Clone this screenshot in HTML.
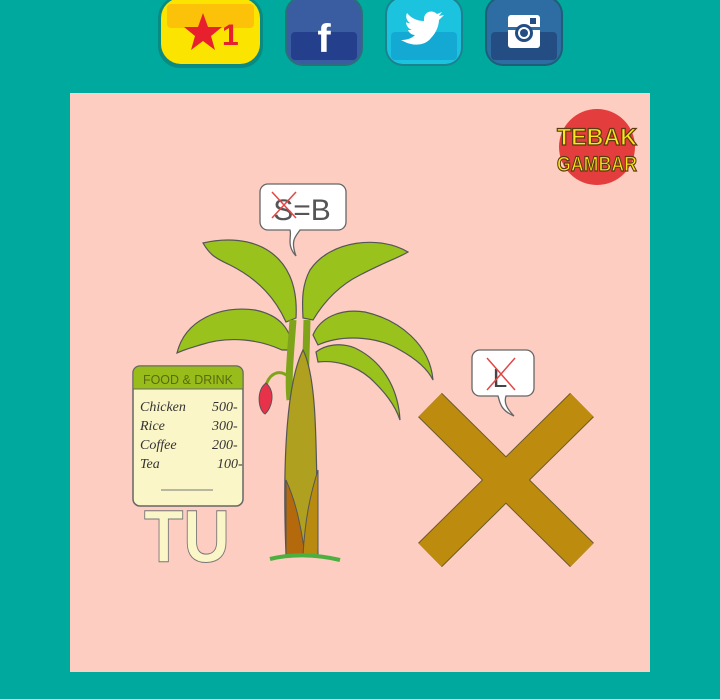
<!DOCTYPE html>
<html><head><meta charset="utf-8"><style>
html,body{margin:0;padding:0;width:720px;height:699px;background:#00a99e;overflow:hidden;font-family:"Liberation Sans",sans-serif}
</style></head><body>
<svg width="720" height="699" viewBox="0 0 720 699" style="position:absolute;left:0;top:0">
<rect x="158" y="-4" width="105" height="72" rx="22" fill="#0a8a80"/>
<rect x="161" y="-2" width="99" height="66" rx="20" fill="#fbe400"/>
<rect x="167" y="4" width="87" height="24" rx="4" fill="#fcc20a"/>
<polygon points="203,13 208,27 222,27 211,36 215,50 203,41 191,50 195,36 184,27 198,27" fill="#e8202e"/>
<text x="222" y="45" font-size="30" font-weight="bold" fill="#e8202e">1</text>
<rect x="285" y="-4" width="78" height="70" rx="18" fill="#2c6f7a"/>
<rect x="287" y="-2" width="74" height="66" rx="16" fill="#3a5ca1"/>
<rect x="291" y="32" width="66" height="28" rx="4" fill="#243f8b"/>
<text x="324" y="52" font-size="40" font-weight="bold" fill="#fff" text-anchor="middle">f</text>
<rect x="385" y="-4" width="78" height="70" rx="18" fill="#1c8290"/>
<rect x="387" y="-2" width="74" height="66" rx="16" fill="#1cc3de"/>
<rect x="391" y="32" width="66" height="28" rx="4" fill="#14a9d3"/>
<path d="M405 42c8 4 20 4 26-4 6-6 8-14 8-18l5-5-5 1 3-4-5 2c-5-5-13-2-13 5l0 2c-7 0-13-3-17-8-2 4 0 8 3 10-2 0-3 0-4-1 0 4 3 7 6 8-2 0-3 0-4 0 1 3 4 5 7 5-4 4-9 5-14 5z" fill="#fff"/>
<rect x="485" y="-4" width="78" height="70" rx="18" fill="#1d5f77"/>
<rect x="487" y="-2" width="74" height="66" rx="16" fill="#2e6da3"/>
<rect x="491" y="32" width="66" height="28" rx="4" fill="#244e83"/>
<rect x="508" y="15" width="32" height="33" rx="3" fill="#fff"/>
<rect x="508" y="27" width="32" height="3" fill="#2e6da3"/>
<circle cx="524" cy="33" r="9" fill="#244e83"/><circle cx="524" cy="33" r="6" fill="#fff"/><circle cx="524" cy="33" r="4" fill="#244e83"/>
<rect x="530" y="18" width="6" height="6" fill="#244e83"/>
<rect x="70" y="93" width="580" height="579" fill="#fdcdc1"/>
<circle cx="597" cy="147" r="38" fill="#e43d3d"/>
<text x="597" y="145" font-size="24" font-weight="bold" fill="#f8e51a" stroke="#5a3a10" stroke-width="1.2" text-anchor="middle" textLength="80" lengthAdjust="spacingAndGlyphs">TEBAK</text>
<text x="597" y="171" font-size="21" font-weight="bold" fill="#f8e51a" stroke="#5a3a10" stroke-width="1.2" text-anchor="middle" textLength="80" lengthAdjust="spacingAndGlyphs">GAMBAR</text>
<rect x="133" y="366" width="110" height="140" rx="7" fill="#fbf6c8" stroke="#666" stroke-width="1.5"/>
<path d="M133 373a7 7 0 0 1 7-7h96a7 7 0 0 1 7 7v16h-110z" fill="#98bd1a" stroke="#666" stroke-width="1"/>
<text x="188" y="384" font-size="13" fill="#5a6a10" text-anchor="middle" textLength="90" lengthAdjust="spacingAndGlyphs">FOOD &amp; DRINK</text>
<g font-size="14" fill="#333" font-family="Liberation Serif,serif" font-style="italic">
<text x="140" y="411">Chicken</text><text x="212" y="411">500-</text>
<text x="140" y="430">Rice</text><text x="212" y="430">300-</text>
<text x="140" y="449">Coffee</text><text x="212" y="449">200-</text>
<text x="140" y="468">Tea</text><text x="217" y="468">100-</text>
</g>
<line x1="161" y1="490" x2="213" y2="490" stroke="#777" stroke-width="1"/>
<text x="187" y="562" font-size="74" font-weight="bold" fill="#fbf6c8" stroke="#777" stroke-width="1" text-anchor="middle" textLength="86" lengthAdjust="spacingAndGlyphs">TU</text>
<g fill="#99c21c" stroke="#555" stroke-width="1.2">
<path d="M203 243 C250 232 300 250 296 318 L286 322 C276 300 260 280 230 265 C215 258 210 255 203 243z"/>
<path d="M177 353 C185 320 220 305 255 310 C280 315 292 330 292 350 L282 350 C260 340 230 335 200 345 C190 348 183 350 177 353z"/>
<path d="M408 252 C380 235 330 240 310 270 C302 285 302 300 303 318 L313 320 C325 300 340 285 360 275 C385 262 398 258 408 252z"/>
<path d="M433 380 C430 345 400 320 365 312 C340 308 320 318 313 335 L318 345 C340 335 375 335 400 350 C418 360 428 370 433 380z"/>
<path d="M400 420 C398 385 380 360 355 348 C340 342 325 345 316 352 L318 362 C335 360 355 365 370 378 C385 392 395 405 400 420z"/>
</g>
<path d="M293 320 C290 360 288 380 290 400 M307 320 C306 360 305 380 305 400" stroke="#7fa41a" stroke-width="7" fill="none"/>
<path d="M290 378 C280 368 270 373 266 385" stroke="#7fa41a" stroke-width="3" fill="none"/>
<path d="M266 383 C256 390 258 410 265 414 C272 408 276 392 266 383z" fill="#e8324a" stroke="#555"/>
<path d="M303 350 C288 380 282 450 286 555 L318 555 C316 450 318 380 303 350z" fill="#b0a020" stroke="#555" stroke-width="1.2"/>
<path d="M286 480 L286 555 L305 555 C300 520 295 500 286 480z" fill="#b46a0c" stroke="#555" stroke-width="1"/>
<path d="M318 470 L318 555 L303 555 C305 520 310 495 318 470z" fill="#b88a10" stroke="#555" stroke-width="1"/>
<path d="M270 559 C290 554 315 554 340 560" stroke="#4cb040" stroke-width="4" fill="none"/>
<path d="M268 184 H338 a8 8 0 0 1 8 8 V222 a8 8 0 0 1 -8 8 H300 C296 236 290 240 296 256 C286 245 292 236 290 230 H268 a8 8 0 0 1 -8 -8 V192 a8 8 0 0 1 8 -8z" fill="#fff" stroke="#666" stroke-width="1.3"/>
<text x="302" y="220" font-size="30" fill="#555" text-anchor="middle">S=B</text>
<path d="M272 192 L296 218 M296 192 L272 218" stroke="#e54545" stroke-width="1.5"/>
<path d="M480 350 H526 a8 8 0 0 1 8 8 V388 a8 8 0 0 1 -8 8 H506 C504 402 506 408 514 416 C500 410 500 402 498 396 H480 a8 8 0 0 1 -8 -8 V358 a8 8 0 0 1 8 -8z" fill="#fff" stroke="#666" stroke-width="1.3"/>
<text x="500" y="387" font-size="26" fill="#444" text-anchor="middle">L</text>
<path d="M487 358 L515 390 M515 358 L487 390" stroke="#e54545" stroke-width="1.5"/>
<g stroke="#6d5a2a" stroke-width="34">
<line x1="430" y1="405" x2="582" y2="555"/><line x1="582" y1="405" x2="430" y2="555"/>
</g>
<g stroke="#bd8c0e" stroke-width="32">
<line x1="430" y1="405" x2="582" y2="555"/><line x1="582" y1="405" x2="430" y2="555"/>
</g>
</svg>
</body></html>
